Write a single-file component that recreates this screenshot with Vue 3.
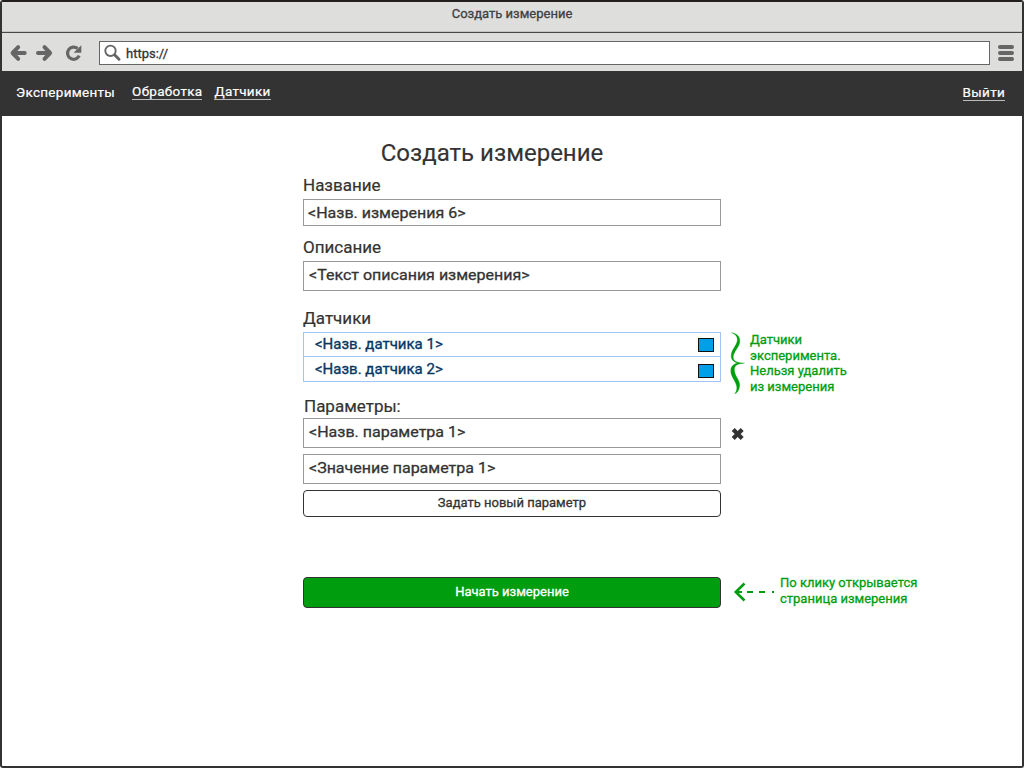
<script setup>
const sensors = ['<Назв. датчика 1>', '<Назв. датчика 2>']
</script>

<template>
  <div class="window">
    <div class="titlebar"><span>Создать измерение</span></div>
    <div class="toolbar">
      <svg class="nav-icons" width="86" height="20" viewBox="0 0 86 20">
        <g fill="none" stroke="#666" stroke-width="4" stroke-linecap="round" stroke-linejoin="round">
          <path d="M16.7 10H5M10.2 4.2L4.6 10L10.2 15.8" />
          <path d="M30 10H42M36.5 4.2L42.1 10L36.5 15.8" />
        </g>
        <path d="M69.6 5.5A6.1 6.1 0 1 0 71.2 12.7" fill="none" stroke="#666" stroke-width="3.2" />
        <path d="M73.3 2.3V9.7H65.6Z" fill="#666" />
      </svg>
      <div class="address">
        <svg width="18" height="18" viewBox="0 0 18 18">
          <circle cx="6.5" cy="6.8" r="5.2" fill="none" stroke="#666" stroke-width="1.9" />
          <path d="M10.8 11L15 15.2" stroke="#666" stroke-width="3" stroke-linecap="round" />
        </svg>
        <span>https://</span>
      </div>
      <div class="burger"><i></i><i></i><i></i></div>
    </div>
    <nav class="menu">
      <span class="current">Эксперименты</span>
      <a class="processing">Обработка</a>
      <a class="devices">Датчики</a>
      <a class="logout">Выйти</a>
    </nav>
    <main class="page">
      <div class="form">
        <h1><span>Создать измерение</span></h1>
        <label class="l-name">Название</label>
        <div class="field f-name"><span>&lt;Назв. измерения 6&gt;</span></div>
        <label class="l-desc">Описание</label>
        <div class="field f-desc"><span>&lt;Текст описания измерения&gt;</span></div>
        <label class="l-sensors">Датчики</label>
        <div class="anchor a-sensors">
          <ul class="sensors">
            <li v-for="name in sensors" :key="name"><span>{{ name }}</span><i></i></li>
          </ul>
          <div class="note note-sensors">
            <svg width="16" height="64" viewBox="0 0 16 64">
              <path d="M1.5 .8C7 1.4 10.5 5 9.8 10C9 16 2.8 20 3.3 26C3.8 29.8 8 30.5 14.5 31.2C8 31.5 4.2 33 4.4 38C4.7 45 11.5 49 9.3 56C8.6 59 7 61.2 4.6 61.7C6.8 59.5 7.4 56.5 6.4 53C4.6 47.5 .4 44 .8 38C1 34 4 31.8 8 31C4 30.3 1.4 28 1.2 24.5C.8 18 6.5 14 7.3 8.5C7.7 5 5.5 2 1.5 .8Z" fill="#009e0f" stroke="#009e0f" stroke-width=".3" />
            </svg>
            <p>Датчики<br>эксперимента.<br>Нельзя удалить<br>из измерения</p>
          </div>
        </div>
        <label class="l-params">Параметры:</label>
        <div class="anchor a-param">
          <div class="field"><span>&lt;Назв. параметра 1&gt;</span></div>
          <svg class="remove" width="14" height="14" viewBox="0 0 14 14">
            <path d="M2.2 2.4L11.2 11.4M11.2 2.4L2.2 11.4" stroke="#333" stroke-width="4.2" />
          </svg>
        </div>
        <div class="field f-pvalue"><span>&lt;Значение параметра 1&gt;</span></div>
        <button class="add"><span>Задать новый параметр</span></button>
        <div class="anchor a-start">
          <button class="start"><span>Начать измерение</span></button>
          <div class="note note-start">
            <svg width="42" height="22" viewBox="0 0 42 22">
              <path d="M11.5 2.5L2.8 11L11.5 19.5" fill="none" stroke="#009e0f" stroke-width="2.6" />
              <path d="M3 11H9M14 11H20M26 11H32M39 11H41" stroke="#009e0f" stroke-width="2" />
            </svg>
            <p>По клику открывается<br>страница измерения</p>
          </div>
        </div>
      </div>
    </main>
  </div>
</template>

<style>
body { margin: 0; background: #fff; }
</style>

<style scoped>
* { box-sizing: border-box; }
.window {
  width: 1024px; height: 768px; border: 2px solid #333; border-top-color: #231f1e;
  border-radius: 3px; overflow: hidden; background: #fff; color: #333;
  font-family: Roboto, "Liberation Sans", sans-serif; font-weight: 400; -webkit-text-stroke: .3px;
  display: flex; flex-direction: column; white-space: nowrap;
}
.titlebar {
  height: 31px; flex: none; background: #dededc; border-bottom: 1px solid #484848;
  box-shadow: inset 0 -1px #c4c4c2; text-align: center; font-size: 13px; line-height: 23px; color: #404040;
}
.toolbar { height: 38px; padding-top: 2px; flex: none; background: #dededc; display: flex; align-items: center; }
.nav-icons { margin-left: 6px; flex: none; }
.address {
  margin-left: 5px; width: 891px; height: 24px; flex: none; border: 1px solid #666; background: #fff;
  display: flex; align-items: center; padding-left: 4px; font-size: 13px; gap: 4px;
}
.burger { margin-left: 8px; display: flex; flex-direction: column; gap: 2px; }
.burger i { width: 16px; height: 4px; border-radius: 2px; background: #666; }
.menu {
  height: 45px; flex: none; background: #333; color: #fff; display: flex; align-items: flex-start;
  padding: 13px 17px 0 14px; font-size: 13.49px; letter-spacing: .3px; line-height: 17px; -webkit-text-stroke: .2px;
}
.menu a { border-bottom: 1px solid #bbb; height: 16px; line-height: 15px; }
.processing { margin-left: 17px; }
.devices { margin-left: 12px; }
.menu .logout { margin-left: auto; height: 17px; line-height: 17px; }
.page { flex: 1; padding-left: 301px; }
.form { width: 418px; display: flex; flex-direction: column; }
h1 { margin: 23px 40px 0 0; height: 28px; line-height: 28px; font-size: 24px; font-weight: 400; text-align: center; -webkit-text-stroke: .15px; }
label { display: block; font-size: 17px; height: 20px; line-height: 20px; -webkit-text-stroke: .2px; }
.field { border: 1px solid #999; height: 30px; padding-left: 5px; font-size: 15px; line-height: 26px; background: #fff; }
.field span { display: inline-block; transform: scaleX(1.067); transform-origin: 0 50%; }
.l-name { margin-top: 8px; }
.f-name { margin-top: 4px; height: 27px; padding-left: 4px; }
.l-desc { margin-top: 11px; }
.f-desc { margin-top: 4px; }
.l-sensors { margin-top: 17px; }
.anchor { position: relative; }
.a-sensors { margin-top: 4px; }
.sensors { list-style: none; margin: 0; padding: 0; border: 1px solid #9fc5f8; height: 50px; }
.sensors li {
  height: 23px; display: flex; justify-content: space-between; align-items: center;
  padding: 0 6px 0 11px; color: #073763; font-size: 15px; line-height: 22px; -webkit-text-stroke: .35px;
}
.sensors li + li { border-top: 1px solid #9fc5f8; height: 25px; }
.sensors li span { margin-top: -1px; }
.sensors i { width: 16px; height: 14px; border: 1px solid #111; background: #009fe8; margin-top: 1px; }
.sensors li + li i { margin-top: 4px; }
.l-params { margin-top: 14px; padding-left: 1px; }
.a-param { margin-top: 2px; }
.remove { position: absolute; left: 428px; top: 9px; }
.f-pvalue { margin-top: 6px; }
button { display: block; width: 418px; border: 1px solid #333; border-radius: 4px; padding: 0; font: 400 13px/23px Roboto, "Liberation Sans", sans-serif; -webkit-text-stroke: .3px; color: #333; background: #fff; }
button span { position: relative; top: -1px; }
.add { height: 27px; margin-top: 6px; }
.a-start { margin-top: 60px; }
.start { height: 31px; background: #009e0f; color: #fff; }
.note { position: absolute; display: flex; color: #009e0f; font-size: 13px; line-height: 15.7px; }
.note p { margin: 0; }
.note-sensors { left: 427px; top: 0; }
.note-sensors p { margin-left: 4px; }
.note-start { left: 430px; top: -2px; }
.note-start svg { margin-top: 6px; }
.note-start p { margin-left: 5px; }
</style>
